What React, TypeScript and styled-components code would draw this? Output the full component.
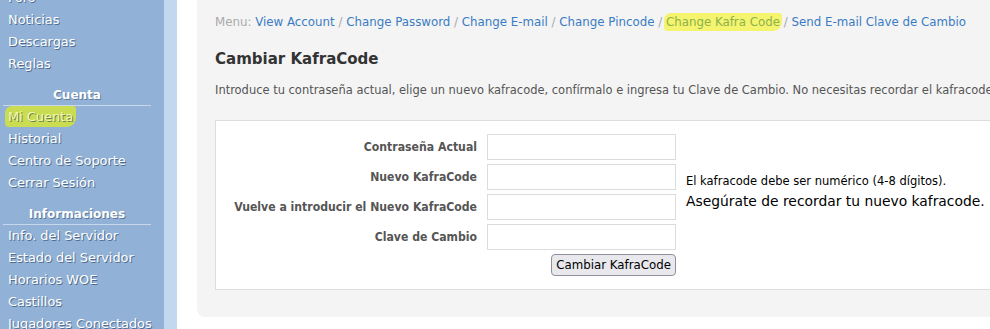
import React from "react";
import styled, { createGlobalStyle } from "styled-components";

const Global = createGlobalStyle`
  html, body { margin: 0; padding: 0; background: #fff; }
  body { font-family: "DejaVu Sans", Verdana, sans-serif; }
`;

const narrow = `"DejaVu Sans Condensed", "DejaVu Sans", Verdana, sans-serif`;

const Page = styled.div`
  display: flex;
  width: 990px;
  height: 329px;
  overflow: hidden;
  background: #fff;
`;

const Sidebar = styled.nav`
  width: 164px;
  flex: none;
  background: #91b2d6;
  padding: 0 13px 0 3px;
  box-sizing: border-box;
  display: flex;
  flex-direction: column;
`;

const SideList = styled.div`
  display: flex;
  flex-direction: column;
  margin-top: -13px;
`;

const SideItem = styled.div<{ $hl?: boolean }>`
  height: 22px;
  line-height: 22px;
  padding-left: 5px;
  font-size: 12.9px;
  color: ${(p) => (p.$hl ? "#f4f8b0" : "#fff")};
  text-shadow: 1px 1px 0 rgba(40, 60, 90, 0.6);
  white-space: nowrap;
`;

const Mark = styled.span<{ $color: string; $pad: number }>`
  background: ${(p) => p.$color};
  border-radius: 7px 3px 9px 4px;
  padding: ${(p) => p.$pad}px ${(p) => p.$pad}px;
  margin: 0 -${(p) => p.$pad}px;
`;

const SideHead = styled.div`
  margin-top: 10px;
  height: 20px;
  line-height: 20px;
  text-align: center;
  font-size: 12px;
  font-weight: bold;
  color: #fff;
  text-shadow: 1px 1px 0 rgba(40, 60, 90, 0.5);
  border-bottom: 1px solid #c7d8ed;
`;

const Strip = styled.div`
  width: 13px;
  flex: none;
  background: #c3d7ee;
`;

const Gap = styled.div`
  width: 20px;
  flex: none;
`;

const Main = styled.main`
  flex: 1;
  height: 317px;
  background: #f4f4f4;
  border-bottom-left-radius: 8px;
  overflow: hidden;
  padding: 14px 0 0 18px;
  box-sizing: border-box;
`;

const Crumbs = styled.div`
  font-size: 11.82px;
  white-space: nowrap;
  color: #aaa;
  line-height: 16px;
`;

const Crumb = styled.a<{ $active?: boolean }>`
  color: ${(p) => (p.$active ? "#8db24c" : "#3a7cc4")};
  text-decoration: none;
`;

const Sep = styled.span`
  color: #aaa;
`;

const Title = styled.h2`
  margin: 16px 0 0;
  font-family: ${narrow};
  font-size: 16.7px;
  font-weight: bold;
  color: #333;
  line-height: 24px;
`;

const Intro = styled.p`
  margin: 12px 0 0;
  font-family: ${narrow};
  font-size: 12.75px;
  color: #555;
  white-space: nowrap;
  line-height: 16px;
`;

const Box = styled.div`
  margin-top: 22px;
  width: 900px;
  background: #fff;
  border: 1px solid #ddd;
  padding: 13px 0 13px;
  display: grid;
  grid-template-columns: 261px 189px auto;
  grid-template-rows: repeat(4, 26px) 22px;
  column-gap: 10px;
  row-gap: 4px;
  align-items: center;
`;

const Label = styled.label`
  text-align: right;
  font-family: ${narrow};
  font-size: 12.15px;
  font-weight: bold;
  color: #555;
  white-space: nowrap;
`;

const Input = styled.input`
  box-sizing: border-box;
  width: 189px;
  height: 26px;
  border: 1px solid #dcdcdc;
  background: #fff;
  margin: 0;
`;

const Notes = styled.div`
  grid-column: 3;
  grid-row: 1 / span 4;
  align-self: center;
  color: #000;
`;

const NoteSmall = styled.div`
  font-size: 11.5px;
  line-height: 18px;
`;

const NoteBig = styled.div`
  font-size: 13.85px;
  line-height: 22px;
`;

const ButtonRow = styled.div`
  grid-column: 2;
  grid-row: 5;
  display: flex;
  justify-content: flex-end;
`;

const Button = styled.button`
  font-family: "DejaVu Sans", sans-serif;
  font-size: 11.8px;
  height: 22px;
  padding: 0 4px;
  background: #e9e9ed;
  border: 1px solid #8f8f9d;
  border-radius: 4px;
  color: #000;
`;

const sideTop = ["Foro", "Noticias", "Descargas", "Reglas"];
const cuenta = ["Mi Cuenta", "Historial", "Centro de Soporte", "Cerrar Sesión"];
const info = [
  "Info. del Servidor",
  "Estado del Servidor",
  "Horarios WOE",
  "Castillos",
  "Jugadores Conectados",
];

const crumbs = [
  "View Account",
  "Change Password",
  "Change E-mail",
  "Change Pincode",
  "Change Kafra Code",
  "Send E-mail Clave de Cambio",
];

export default function App() {
  return (
    <>
      <Global />
      <Page>
        <Sidebar>
          <SideList>
            {sideTop.map((t) => (
              <SideItem key={t}>{t}</SideItem>
            ))}
            <SideHead>Cuenta</SideHead>
            {cuenta.map((t) => (
              <SideItem key={t} $hl={t === "Mi Cuenta"}>
                {t === "Mi Cuenta" ? (
                  <Mark $color="#c9dc52" $pad={3}>
                    {t}
                  </Mark>
                ) : (
                  t
                )}
              </SideItem>
            ))}
            <SideHead>Informaciones</SideHead>
            {info.map((t) => (
              <SideItem key={t}>{t}</SideItem>
            ))}
          </SideList>
        </Sidebar>
        <Strip />
        <Gap />
        <Main>
          <Crumbs>
            Menu:{" "}
            {crumbs.map((c, i) => (
              <React.Fragment key={c}>
                {i > 0 && <Sep> / </Sep>}
                {c === "Change Kafra Code" ? (
                  <Mark $color="#f4f46e" $pad={2}>
                    <Crumb href="#" $active>
                      {c}
                    </Crumb>
                  </Mark>
                ) : (
                  <Crumb href="#">{c}</Crumb>
                )}
              </React.Fragment>
            ))}
          </Crumbs>
          <Title>Cambiar KafraCode</Title>
          <Intro>
            Introduce tu contraseña actual, elige un nuevo kafracode, confírmalo e ingresa tu
            Clave de Cambio. No necesitas recordar el kafracode anterior.
          </Intro>
          <Box>
            <Label>Contraseña Actual</Label>
            <Input type="password" />
            <Notes>
              <NoteSmall>El kafracode debe ser numérico (4-8 dígitos).</NoteSmall>
              <NoteBig>Asegúrate de recordar tu nuevo kafracode.</NoteBig>
            </Notes>
            <Label>Nuevo KafraCode</Label>
            <Input type="password" />
            <Label>Vuelve a introducir el Nuevo KafraCode</Label>
            <Input type="password" />
            <Label>Clave de Cambio</Label>
            <Input type="password" />
            <ButtonRow>
              <Button type="button">Cambiar KafraCode</Button>
            </ButtonRow>
          </Box>
        </Main>
      </Page>
    </>
  );
}
